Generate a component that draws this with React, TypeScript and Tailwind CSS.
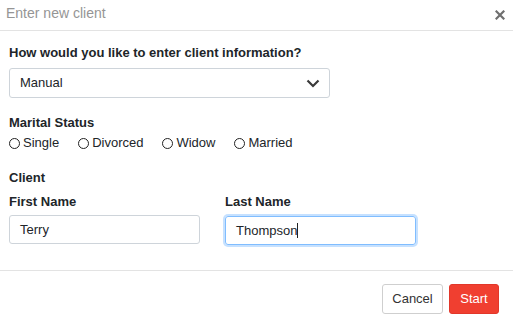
export default function App() {
  const statuses = ['Single', 'Divorced', 'Widow', 'Married'];

  return (
    <div className="w-[513px] h-[325px] bg-white text-[#212529] font-['Liberation_Sans',Arial,sans-serif] overflow-hidden">
      {/* header */}
      <div className="h-[31px] border-b border-[#e3e3e3] flex items-center justify-between pl-[6px] pr-[8px] pb-[4px]">
        <span className="text-[14px] text-[#959595]">Enter new client</span>
        <svg width="10" height="10" viewBox="0 0 10 10" className="mt-[4px]">
          <path d="M1.5 1.5 L8.5 8.5 M8.5 1.5 L1.5 8.5" stroke="#6f6f6f" strokeWidth="2.2" strokeLinecap="square" />
        </svg>
      </div>

      <div className="px-[9px]">
        <div className="mt-[14px] text-[13px] leading-[16px] font-bold">How would you like to enter client information?</div>
        <div className="mt-[7px] w-[321px] h-[30px] border border-[#ced4da] rounded-[3px] flex items-center justify-between pl-[10px] pr-[9px]">
          <span className="text-[13px]">Manual</span>
          <svg width="14" height="9" viewBox="0 0 14 9">
            <path d="M1.5 1.5 L7 7 L12.5 1.5" fill="none" stroke="#3a3a3a" strokeWidth="2.2" />
          </svg>
        </div>

        <div className="mt-[17px] text-[13px] leading-[16px] font-bold">Marital Status</div>
        <div className="mt-[4px] flex gap-x-[19px] text-[13px] leading-[16px]">
          {statuses.map((s) => (
            <label key={s} className="flex items-center gap-[3px]">
              <span className="w-[11px] h-[11px] rounded-full border-[1.7px] border-[#222]" />
              <span>{s}</span>
            </label>
          ))}
        </div>

        <div className="mt-[19px] text-[13px] leading-[16px] font-bold">Client</div>
        <div className="mt-[8px] flex gap-[25px]">
          <div className="w-[191px]">
            <div className="text-[13px] leading-[16px] font-bold">First Name</div>
            <div className="mt-[5px] h-[29px] border border-[#ced4da] rounded-[3px] flex items-center pl-[10px] text-[13px]">Terry</div>
          </div>
          <div className="w-[191px]">
            <div className="text-[13px] leading-[16px] font-bold">Last Name</div>
            <div className="mt-[6px] h-[29px] border border-[#80bdff] rounded-[3px] shadow-[0_0_0_2px_rgba(128,189,255,0.45)] flex items-center pl-[10px] text-[13px]">
              Thompson<span className="w-[1px] h-[15px] bg-[#222]" />
            </div>
          </div>
        </div>
      </div>

      {/* footer */}
      <div className="mt-[25px] border-t border-[#e3e3e3] flex justify-end gap-[6px] pt-[13px] pr-[14px]">
        <button className="w-[61px] h-[30px] border border-[#cfcfcf] rounded-[3px] bg-white text-[13px] text-[#333]">Cancel</button>
        <button className="w-[50px] h-[30px] border border-[#e2372a] rounded-[3px] bg-[#f03f30] text-[13px] text-white">Start</button>
      </div>
    </div>
  );
}
